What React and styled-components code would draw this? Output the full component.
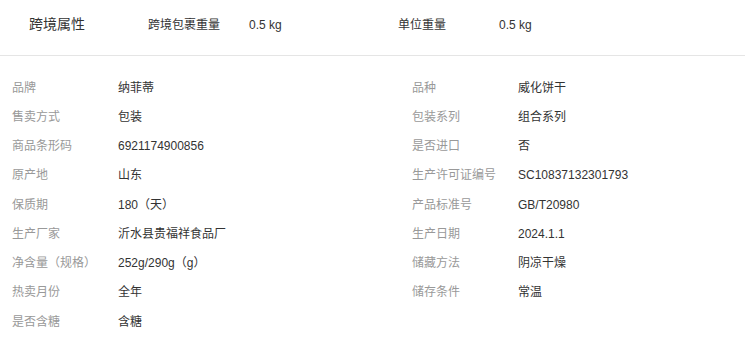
import React from "react";
import styled, { createGlobalStyle } from "styled-components";

const GlobalStyle = createGlobalStyle`
  body {
    margin: 0;
    background: #fff;
    font-family: "Liberation Sans", Arial, "Noto Sans CJK SC", sans-serif;
  }
`;

const Page = styled.div`
  width: 745px;
  height: 338px;
  overflow: hidden;
  background: #fff;
`;

const Header = styled.div`
  height: 48px;
  line-height: 48px;
  padding: 0 0 7px 29px;
  border-bottom: 1px solid #e5e5e5;
  margin-bottom: 17.5px;
  white-space: nowrap;
  color: #333;
`;

const HeaderTitle = styled.span`
  display: inline-block;
  width: 119px;
  font-size: 14px;
`;

const HeaderPair = styled.span`
  display: inline-block;
  width: 250px;
  font-size: 12px;
`;

const HeaderLabel = styled.span`
  display: inline-block;
  width: 101px;
`;

const Grid = styled.div`
  display: grid;
  grid-template-columns: 400px 1fr;
  grid-auto-rows: 29.25px;
  padding-left: 12px;
`;

const Cell = styled.div`
  font-size: 12px;
  line-height: 29.25px;
  white-space: nowrap;
`;

const Label = styled.span`
  display: inline-block;
  width: 106px;
  color: #999;
`;

const Value = styled.span`
  color: #333;
`;

const rows = [
  ["品牌", "纳菲蒂", "品种", "威化饼干"],
  ["售卖方式", "包装", "包装系列", "组合系列"],
  ["商品条形码", "6921174900856", "是否进口", "否"],
  ["原产地", "山东", "生产许可证编号", "SC10837132301793"],
  ["保质期", "180（天）", "产品标准号", "GB/T20980"],
  ["生产厂家", "沂水县贵福祥食品厂", "生产日期", "2024.1.1"],
  ["净含量（规格）", "252g/290g（g）", "储藏方法", "阴凉干燥"],
  ["热卖月份", "全年", "储存条件", "常温"],
  ["是否含糖", "含糖"],
];

export default function App() {
  return (
    <Page>
      <GlobalStyle />
      <Header>
        <HeaderTitle>跨境属性</HeaderTitle>
        <HeaderPair>
          <HeaderLabel>跨境包裹重量</HeaderLabel>
          0.5 kg
        </HeaderPair>
        <HeaderPair>
          <HeaderLabel>单位重量</HeaderLabel>
          0.5 kg
        </HeaderPair>
      </Header>
      <Grid>
        {rows.map((r, i) => (
          <React.Fragment key={i}>
            <Cell>
              <Label>{r[0]}</Label>
              <Value>{r[1]}</Value>
            </Cell>
            <Cell>
              {r[2] && (
                <>
                  <Label>{r[2]}</Label>
                  <Value>{r[3]}</Value>
                </>
              )}
            </Cell>
          </React.Fragment>
        ))}
      </Grid>
    </Page>
  );
}
